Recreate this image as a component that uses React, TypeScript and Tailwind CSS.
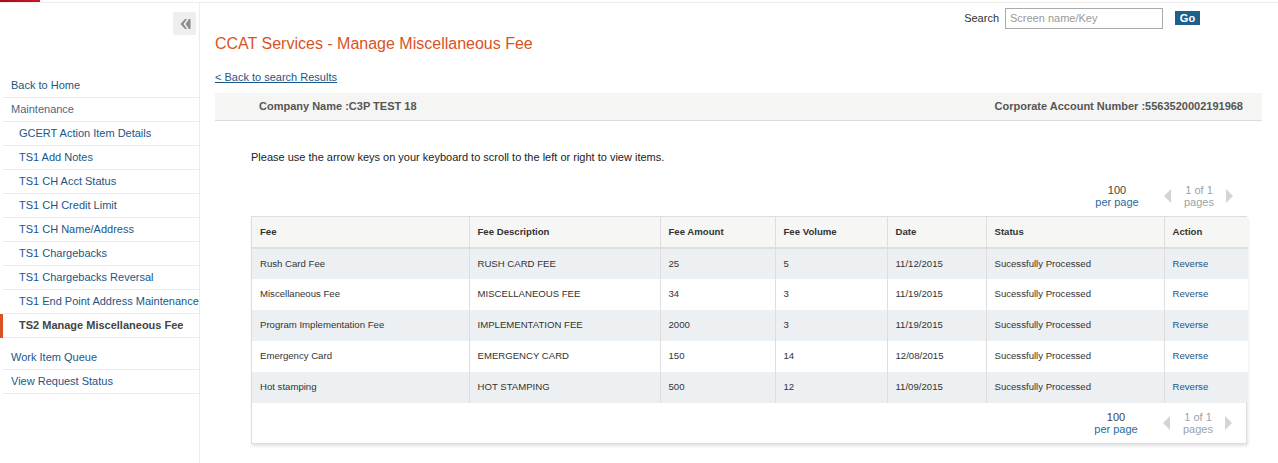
import React from "react";

const font = { fontFamily: '"Liberation Sans", Arial, sans-serif' };

type NavItem = { label: string; indent?: boolean; active?: boolean; muted?: boolean };

const NAV_TOP: NavItem[] = [
  { label: "Back to Home" },
  { label: "Maintenance", muted: true },
  { label: "GCERT Action Item Details", indent: true },
  { label: "TS1 Add Notes", indent: true },
  { label: "TS1 CH Acct Status", indent: true },
  { label: "TS1 CH Credit Limit", indent: true },
  { label: "TS1 CH Name/Address", indent: true },
  { label: "TS1 Chargebacks", indent: true },
  { label: "TS1 Chargebacks Reversal", indent: true },
  { label: "TS1 End Point Address Maintenance", indent: true },
  { label: "TS2 Manage Miscellaneous Fee", indent: true, active: true },
];

const NAV_BOTTOM: NavItem[] = [{ label: "Work Item Queue" }, { label: "View Request Status" }];

const COLS = [
  { label: "Fee", w: 217 },
  { label: "Fee Description", w: 191 },
  { label: "Fee Amount", w: 115 },
  { label: "Fee Volume", w: 112 },
  { label: "Date", w: 99 },
  { label: "Status", w: 178 },
  { label: "Action", w: 84 },
];

const ROWS = [
  ["Rush Card Fee", "RUSH CARD FEE", "25", "5", "11/12/2015"],
  ["Miscellaneous Fee", "MISCELLANEOUS FEE", "34", "3", "11/19/2015"],
  ["Program Implementation Fee", "IMPLEMENTATION FEE", "2000", "3", "11/19/2015"],
  ["Emergency Card", "EMERGENCY CARD", "150", "14", "12/08/2015"],
  ["Hot stamping", "HOT STAMPING", "500", "12", "11/09/2015"],
];

function NavRow({ item }: { item: NavItem }) {
  return (
    <li className="flex h-[24px]">
      <span className={`w-[3px] shrink-0 ${item.active ? "bg-[#d9531e]" : ""}`} />
      <div
        className={`flex flex-1 items-center whitespace-nowrap border-b border-[#ececec] text-[11px] ${
          item.indent ? "pl-[16px]" : "pl-[8px]"
        } ${
          item.active
            ? "font-bold text-[#444]"
            : item.muted
              ? "text-[#4a6886]"
              : "text-[#1b5687]"
        }`}
      >
        {item.label}
      </div>
    </li>
  );
}

function Pager() {
  return (
    <div className="flex items-center justify-end text-[11px] leading-[12px]">
      <div className="w-[44px] text-center">
        <div className="text-[#444]">100</div>
        <div className="text-[#1f6aa0]">per page</div>
      </div>
      <span className="ml-[25px] h-0 w-0 border-y-[7px] border-r-[7px] border-y-transparent border-r-[#d4d4d4]" />
      <div className="ml-[10px] w-[36px] text-center text-[#9aa3ab]">
        <div>1 of 1</div>
        <div>pages</div>
      </div>
      <span className="ml-[9px] mr-[14px] h-0 w-0 border-y-[7px] border-l-[7px] border-y-transparent border-l-[#d4d4d4]" />
    </div>
  );
}

export default function App() {
  return (
    <div className="flex h-[463px] w-full flex-col overflow-hidden bg-white" style={font}>
      <div className="flex h-[3px] shrink-0 border-b border-[#ececec]">
        <div className="h-[2px] w-[40px] bg-gradient-to-r from-[#a50d1e] to-[#d0112b]" />
      </div>
      <div className="flex flex-1">
        <aside className="w-[200px] shrink-0 border-r border-[#ececec]">
          <div className="flex justify-end pr-[3px] pt-[9px]">
            <button className="flex h-[23px] w-[23px] items-center justify-center rounded-[2px] bg-[#eeeeee]">
              <svg width="12" height="12" viewBox="0 0 12 12">
                <path d="M6 1 L1.5 6 L6 11 L8 11 L4.5 6 L8 1 Z" fill="#8c8c8c" />
                <path d="M10 1 L6.5 6 L10 11 L11.5 11 L11.5 1 Z" fill="#8c8c8c" />
              </svg>
            </button>
          </div>
          <ul className="mt-[39px]">
            {NAV_TOP.map((it) => (
              <NavRow key={it.label} item={it} />
            ))}
          </ul>
          <ul className="mt-[8px]">
            {NAV_BOTTOM.map((it) => (
              <NavRow key={it.label} item={it} />
            ))}
          </ul>
        </aside>

        <main className="min-w-0 flex-1 pl-[15px] pr-[16px]">
          <div className="mr-[62px] mt-[4px] flex h-[22px] items-center justify-end text-[11px]">
            <span className="mr-[6px] text-[#333]">Search</span>
            <input
              placeholder="Screen name/Key"
              className="h-[21px] w-[158px] border border-[#aaa] px-[4px] text-[11px] text-[#333] placeholder:text-[#999]"
            />
            <button className="ml-[12px] h-[14px] w-[25px] bg-[#1f5f8b] text-[11px] font-bold leading-[14px] text-white">
              Go
            </button>
          </div>

          <h1 className="mt-[6px] text-[16px] leading-[18px] text-[#d9531e]">
            CCAT Services - Manage Miscellaneous Fee
          </h1>

          <a href="#" className="mt-[18px] block text-[11px] leading-[13px] text-[#1b5687] underline">
            &lt; Back to search Results
          </a>

          <div className="mt-[9px] flex h-[28px] items-center justify-between border-b border-[#dcdcdc] bg-[#f5f5f3] pl-[44px] pr-[19px] text-[11px] font-bold text-[#555]">
            <span>Company Name :C3P TEST 18</span>
            <span>Corporate Account Number :5563520002191968</span>
          </div>

          <div className="ml-[36px] mr-[15px]">
            <p className="mt-[30px] text-[11px] leading-[13px] text-[#222]">
              Please use the arrow keys on your keyboard to scroll to the left or right to view items.
            </p>

            <div className="mt-[20px]">
              <Pager />
            </div>

            <div className="mt-[8px] border border-[#dedede] shadow-[1px_2px_3px_rgba(0,0,0,0.12)]">
              <table className="w-full table-fixed border-collapse text-left text-[9.6px]">
                <colgroup>
                  {COLS.map((c) => (
                    <col key={c.label} style={{ width: c.w }} />
                  ))}
                </colgroup>
                <thead>
                  <tr className="h-[31px] border-b-2 border-[#dedede] bg-[#f6f6f4]">
                    {COLS.map((c, i) => (
                      <th
                        key={c.label}
                        className={`px-[8px] font-bold text-[#333] ${
                          i < COLS.length - 1 ? "border-r border-[#dedede]" : ""
                        }`}
                      >
                        {c.label}
                      </th>
                    ))}
                  </tr>
                </thead>
                <tbody>
                  {ROWS.map((r, ri) => (
                    <tr key={r[0]} className={`h-[31px] ${ri % 2 === 0 ? "bg-[#ecf0f2]" : "bg-white"}`}>
                      {[...r, "Sucessfully Processed"].map((cell, ci) => (
                        <td key={ci} className="border-r border-[#dedede] px-[8px] text-[#333]">
                          {cell}
                        </td>
                      ))}
                      <td className="px-[8px] text-[#1b5687]">Reverse</td>
                    </tr>
                  ))}
                </tbody>
              </table>
              <div className="flex h-[40px] items-center justify-end">
                <Pager />
              </div>
            </div>
          </div>
        </main>
      </div>
    </div>
  );
}
